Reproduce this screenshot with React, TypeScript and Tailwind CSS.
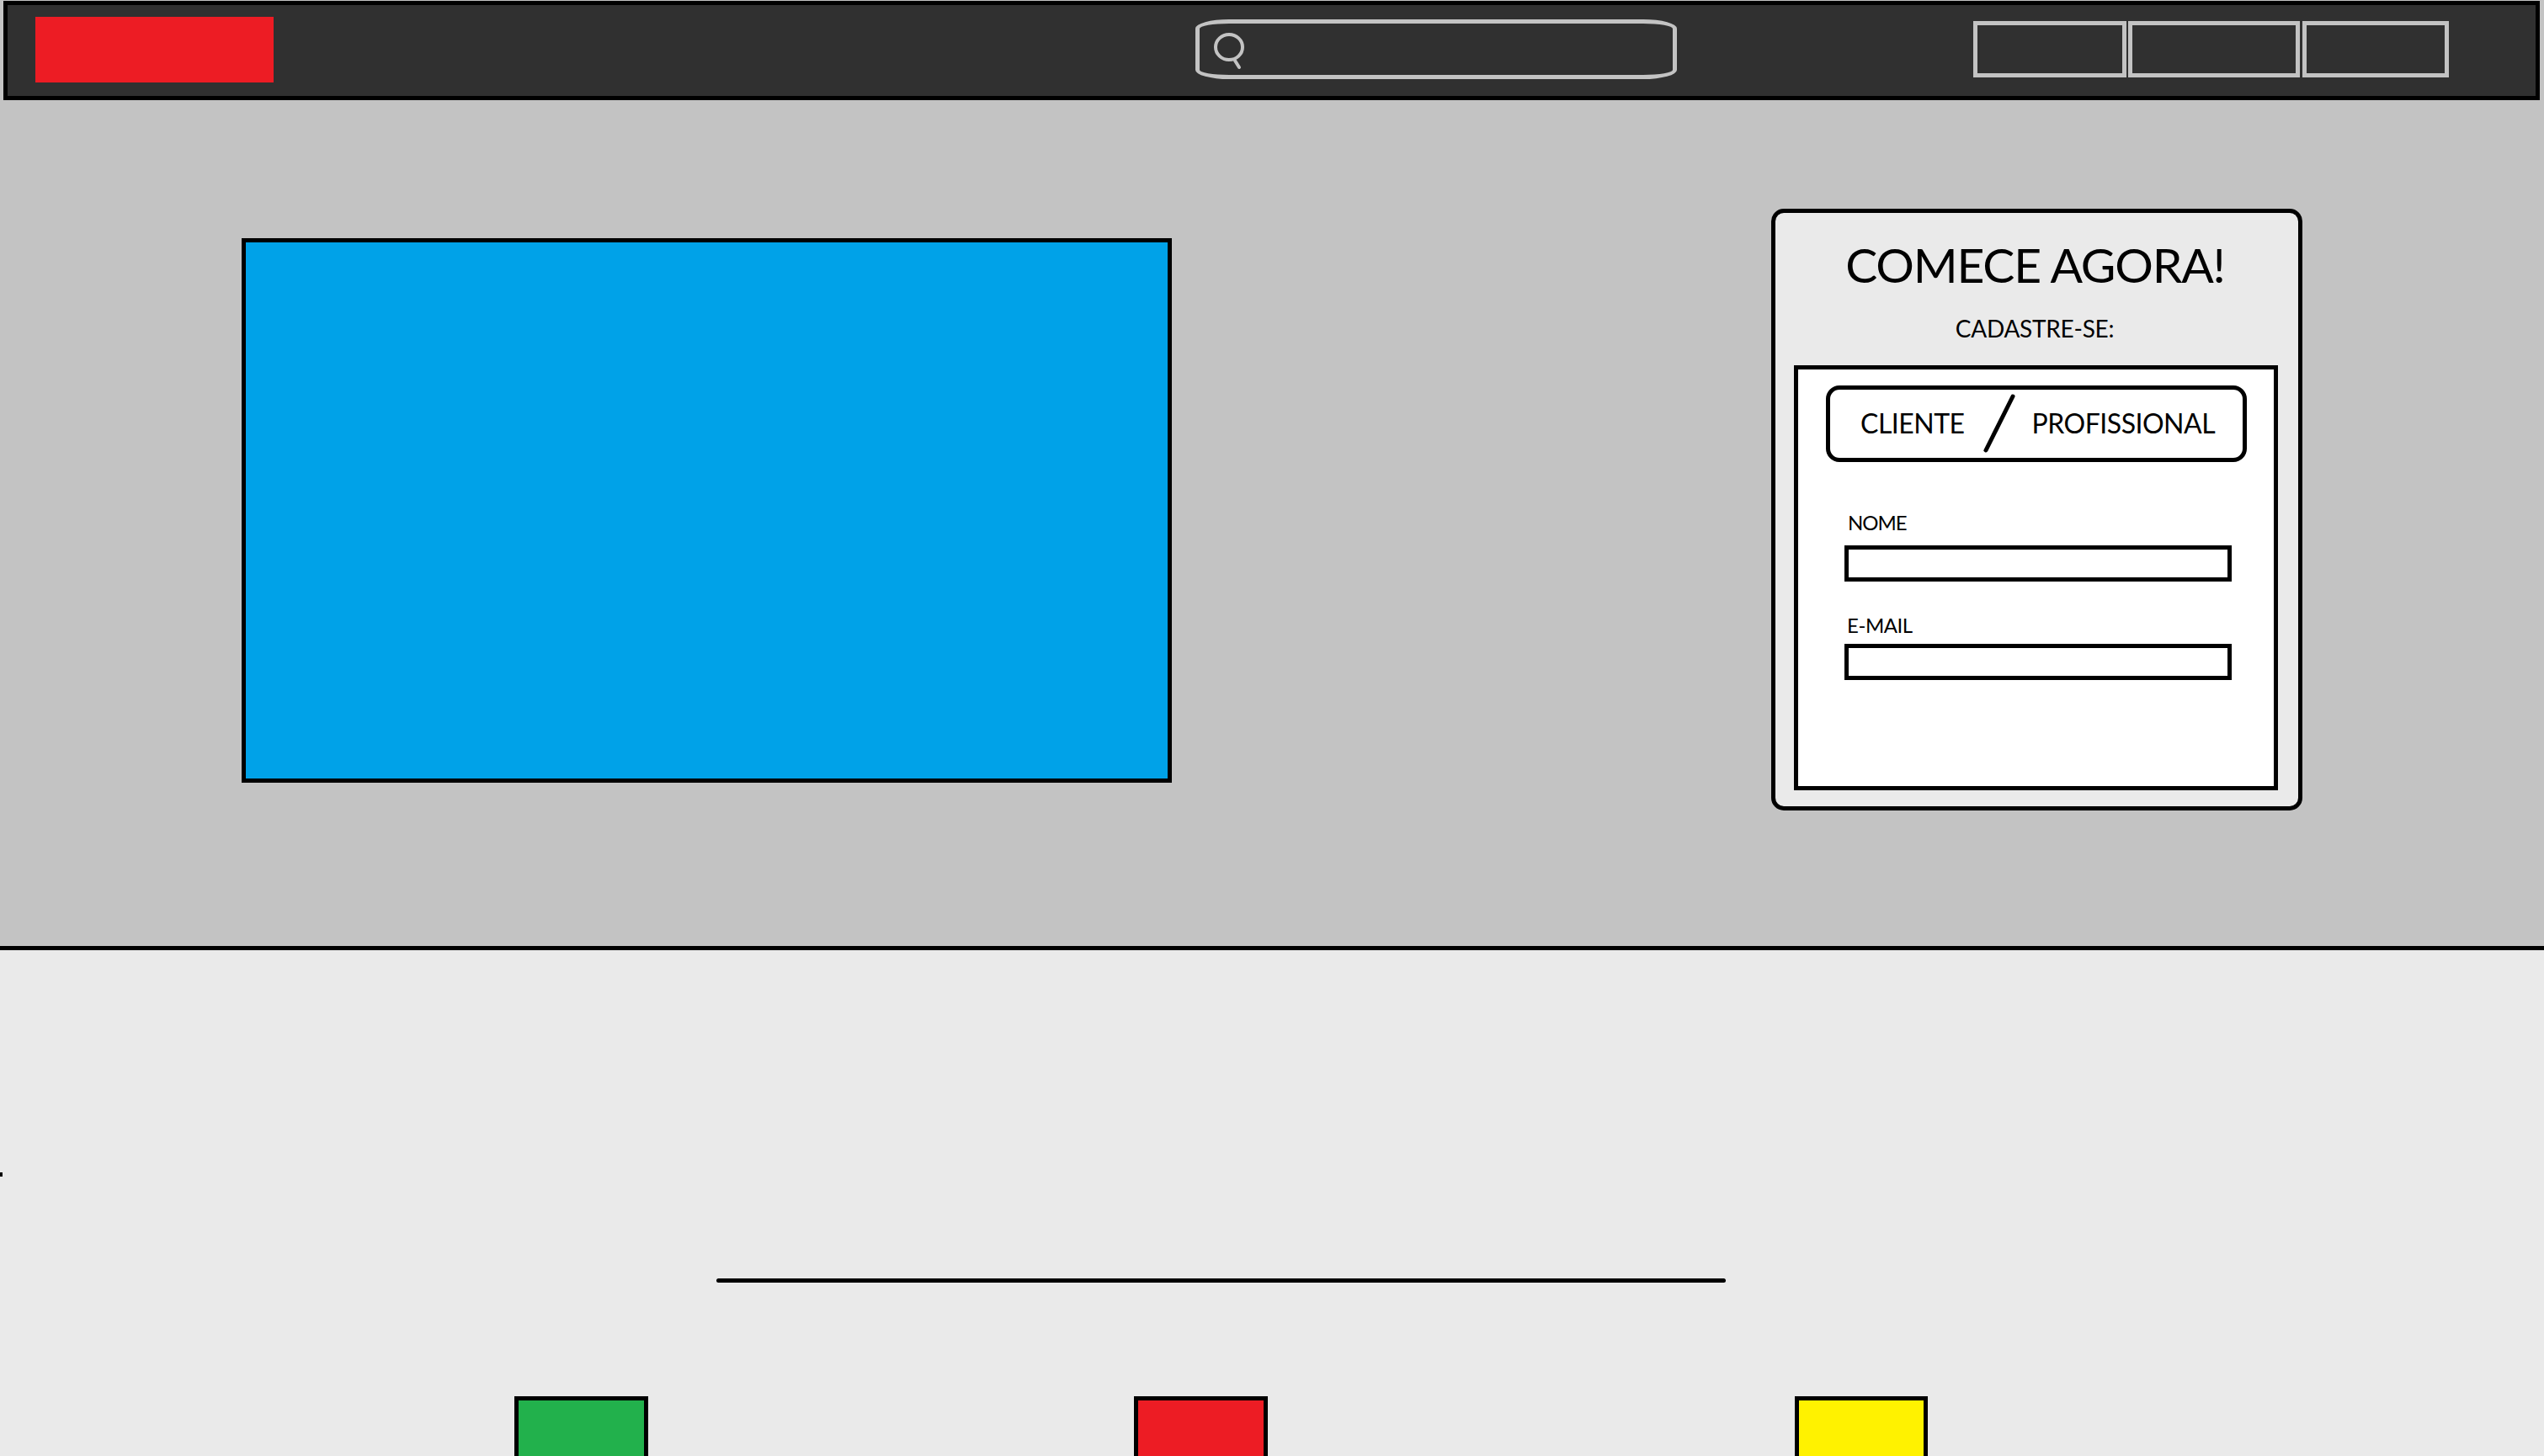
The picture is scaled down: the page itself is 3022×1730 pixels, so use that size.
const Field = ({ label, labelClass, inputClass }: { label: string; labelClass: string; inputClass: string }) => {
  return (
    <>
      <span className={labelClass}>{label}</span>
      <div className={inputClass}></div>
    </>
  );
};

const SearchIcon = () => {
  return (
    <svg width="44" height="48" viewBox="0 0 44 48" fill="none" stroke="#c3c3c3" strokeWidth="4" strokeLinecap="round" className="ml-[15px] mt-[9px]">
      <ellipse cx="20" cy="19" rx="16" ry="15" />
      <path d="M27 35 L32 43" />
    </svg>
  );
};

const Navbar = () => {
  return (
    <div className="shrink-0 pt-px pl-[4px] pr-[5px]">
      <div className="flex items-start h-[118px] bg-[#303030] border-[5px] border-black">
        <div className="w-[283px] h-[78px] ml-[33px] mt-[14px] bg-[#ed1c24]"></div>
        <div className="w-[572px] h-[71px] ml-[1095px] mt-[17px] border-[5px] border-[#c3c3c3] rounded-[40px/11px]">
          <SearchIcon />
        </div>
        <div className="flex ml-[352px] mt-[19px]">
          <div className="w-[182px] h-[67px] border-[5px] border-[#c3c3c3]"></div>
          <div className="w-[204px] h-[67px] ml-[2px] border-[5px] border-[#c3c3c3]"></div>
          <div className="w-[174px] h-[67px] ml-[3px] border-[5px] border-[#c3c3c3]"></div>
        </div>
      </div>
    </div>
  );
};

const SignupCard = () => {
  return (
    <div className="flex flex-col items-center w-[631px] h-[715px] ml-[712px] mt-[129px] bg-[#eaeaea] border-[5px] border-black rounded-[15px] text-black font-['Lato',sans-serif]">
      <h1 className="mt-[29px] pr-[4px] text-[57px] leading-[64px] tracking-[-1.2px] font-normal whitespace-nowrap">COMECE AGORA!</h1>
      <p className="mt-[26px] pr-[5px] text-[28px] leading-[36px] tracking-[-0.25px] whitespace-nowrap">CADASTRE-SE:</p>
      <div className="flex flex-col items-start self-start w-[575px] h-[505px] ml-[22px] mt-[26px] bg-white border-[5px] border-black">
        <div className="flex items-center w-[500px] h-[91px] ml-[33px] mt-[19px] pl-[36px] pb-[2px] border-[5px] border-black rounded-[16px] text-[32px] leading-[40px] tracking-[-0.5px]">
          <span>CLIENTE</span>
          <svg width="40" height="70" viewBox="0 0 40 70" fill="none" stroke="black" strokeWidth="5" strokeLinecap="round" className="ml-[22px]">
            <path d="M35 3 L3 67" />
          </svg>
          <span className="ml-[18px]">PROFISSIONAL</span>
        </div>
        <Field label="NOME" labelClass="ml-[59px] mt-[57px] text-[24px] leading-[30px] tracking-[-1px]" inputClass="w-[460px] h-[43px] ml-[55px] mt-[12px] border-[5px] border-black" />
        <Field label="E-MAIL" labelClass="ml-[58px] mt-[37px] text-[24px] leading-[30px] tracking-[-0.45px]" inputClass="w-[460px] h-[43px] ml-[55px] mt-[7px] border-[5px] border-black" />
      </div>
    </div>
  );
};

const App = () => {
  return (
    <div className="relative flex flex-col w-[3022px] h-[1730px] overflow-hidden bg-[#c3c3c3]">
      <Navbar />
      <main className="flex shrink-0 items-start h-[1005px]">
        <div className="w-[1105px] h-[647px] ml-[287px] mt-[164px] bg-[#00a2e8] border-[5px] border-black"></div>
        <SignupCard />
      </main>
      <section className="relative flex-1 min-h-0 bg-[#eaeaea] border-t-[5px] border-black">
        {/* stray mark on the left edge of the mockup */}
        <span className="absolute left-0 top-[264px] w-[3px] h-[5px] bg-black"></span>
        <div className="w-[1199px] h-[5px] ml-[851px] mt-[390px] bg-black rounded-full"></div>
        <div className="flex mt-[135px]">
          <div className="w-[159px] h-[160px] ml-[611px] bg-[#22b14c] border-[5px] border-black"></div>
          <div className="w-[159px] h-[160px] ml-[577px] bg-[#ed1c24] border-[5px] border-black"></div>
          <div className="w-[158px] h-[160px] ml-[626px] bg-[#fff200] border-[5px] border-black"></div>
        </div>
      </section>
    </div>
  );
};

export default App;
